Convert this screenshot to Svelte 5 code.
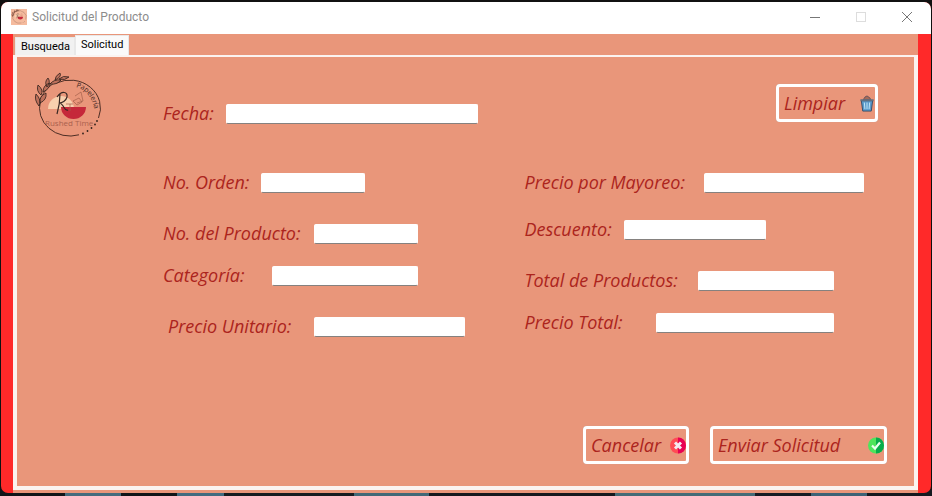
<script>
  const leftFields = [
    { id: 'orden', label: 'No. Orden:', labelWidth: 98, width: 104, space: 'none' },
    { id: 'producto', label: 'No. del Producto:', labelWidth: 151, width: 104, space: 'far' },
    { id: 'categoria', label: 'Categoría:', labelWidth: 109, width: 146, space: 'near' },
    { id: 'unitario', label: 'Precio Unitario:', labelWidth: 151, width: 151, space: 'far', indent: true }
  ];
  const rightFields = [
    { id: 'mayoreo', label: 'Precio por Mayoreo:', labelWidth: 180, width: 160, space: 'none' },
    { id: 'descuento', label: 'Descuento:', labelWidth: 100, width: 142, space: 'mid' },
    { id: 'total-productos', label: 'Total de Productos:', labelWidth: 174, width: 136, space: 'far' },
    { id: 'precio-total', label: 'Precio Total:', labelWidth: 132, width: 178, space: 'near' }
  ];
</script>

{#snippet field(f)}
  <div class="field {f.space}">
    <label class:indent={f.indent} for={f.id} style="width: {f.labelWidth}px">{f.label}</label>
    <input id={f.id} type="text" style="width: {f.width}px" />
  </div>
{/snippet}

{#snippet emblem()}
  <path d="M30 14.2A30.500 28 0 0 1 72.500 49M53 65.800A30.500 28 0 0 1 14.500 32" fill="none" stroke="#3b211b" stroke-width=".9" />
  <g fill="#30211c"><circle cx="71" cy="52" r=".9" /><circle cx="69" cy="55.500" r=".9" /><circle cx="65.500" cy="59" r=".9" /><circle cx="61.500" cy="62" r=".9" /><circle cx="57" cy="64.500" r=".9" /></g>
  <path d="M22 40a13 13 0 0 1 26 0z" fill="#f8d0ae" />
  <path d="M35 38h25a12.500 12 0 0 1-25 0z" fill="#c5283a" />
  <path d="M31 45c2-7 3-14 3-20m-3 3c5-7 11-5 10 0-1 4-5 6-8 6 5 0 5 9 9 7" fill="none" stroke="#382823" stroke-width="1.2" />
  <path d="M40 35h7m-3 0v7m3-10 6-3 3 4-5 3zm2-5 6-4 2 9-6 2" fill="none" stroke="#a5604b" stroke-width=".7" />
  <path d="M13 37C15 24 22 16 36 10" fill="none" stroke="#30211c" stroke-width=".8" />
  <path d="M13 37q-5-6-3-12 6 6 3 12m1-3q-1-7 6-10 1 7-6 10m1-8q-5-4-3-10 6 5 3 10m2-3q0-7 7-9 0 6-7 9m4-5q-3-5 1-9 3 4-1 9m3-3q4-5 11-4-4 5-11 4m5-4q0-4 5-7 2 4-5 7m4-1q4-4 10-2-4 4-10 2" fill="#bd705b" stroke="#30211c" stroke-width=".8" />
{/snippet}

<main class="desktop">
  <div class="window">
    <header>
      <svg class="app-icon" viewBox="6 3 72 72" aria-hidden="true"><rect x="6" y="3" width="72" height="72" fill="#f5bb9e" />{@render emblem()}</svg>
      <h1>Solicitud del Producto</h1>
      <div class="controls">
        <button type="button" aria-label="Minimizar"><svg viewBox="0 0 12 12"><path d="M1 6.5h10" stroke="#777" /></svg></button>
        <button type="button" aria-label="Maximizar" disabled><svg viewBox="0 0 12 12"><rect x="1.5" y="1.5" width="9" height="9" stroke="#ddd" /></svg></button>
        <button type="button" aria-label="Cerrar"><svg viewBox="0 0 12 12"><path d="M1 1l10 10M11 1L1 11" stroke="#777" /></svg></button>
      </div>
    </header>

    <div class="body">
      <div class="tabs" role="tablist">
        <button type="button" role="tab" aria-selected="false">Busqueda</button>
        <button type="button" role="tab" aria-selected="true" class="active">Solicitud</button>
      </div>
      <form class="panel" role="tabpanel" aria-label="Solicitud">
        <svg class="logo" viewBox="9 6 70 65" role="img" aria-label="Papelería Rushed Time">
          {@render emblem()}
          <path id="arc" d="M50 18Q65 22 69 42" fill="none" />
          <text class="small"><textPath href="#arc">Papelería</textPath></text>
          <text x="19" y="57" class="brand">Rushed Time</text>
        </svg>
        <div class="content">
          <div class="top">
            <div class="field date">
              <label for="fecha" style="width: 63px">Fecha:</label>
              <input id="fecha" type="text" style="width: 252px" />
            </div>
            <button type="button" class="action clear">
              Limpiar
              <svg viewBox="0 0 16 18" aria-hidden="true">
                <path d="M4 5l2-3 2-1 3 2 1 2z" fill="#a66b58" stroke="#65535b" />
                <path d="M2 6h12l-1.500 11h-9z" fill="#5c9bcb" stroke="#334b69" />
                <path d="M5.200 8l.6 7M8 8v7M10.800 8l-.6 7" stroke="#c5e9fa" />
                <path d="M1 5.500h14" stroke="#626f80" stroke-width="2" />
              </svg>
            </button>
          </div>
          <div class="columns">
            <div>{#each leftFields as f}{@render field(f)}{/each}</div>
            <div>{#each rightFields as f}{@render field(f)}{/each}</div>
          </div>
          <div class="actions">
            <button type="button" class="action cancel">
              Cancelar
              <svg viewBox="0 0 16 16" aria-hidden="true">
                <circle cx="8" cy="8" r="8" fill="#ff4b55" /><path d="M8 0a8 8 0 0 1 0 16z" fill="#e80054" />
                <path d="M5 5l6 6M11 5l-6 6" stroke="#f5e9f2" stroke-width="3" />
              </svg>
            </button>
            <button type="submit" class="action send">
              Enviar Solicitud
              <svg viewBox="0 0 16 16" aria-hidden="true">
                <circle cx="8" cy="8" r="8" fill="#4ee45c" /><path d="M8 0a8 8 0 0 1 0 16z" fill="#08ac4b" />
                <path d="M4 8l3 3 5-6" fill="none" stroke="#eafff0" stroke-width="2.200" />
              </svg>
            </button>
          </div>
        </div>
      </form>
    </div>
  </div>
</main>

<style>
  :global(body) { margin: 0; }
  * { box-sizing: border-box; }
  .desktop {
    min-height: 100vh;
    padding: 2px 1px 3px;
    display: flex;
    background: linear-gradient(90deg, #111519 0 7%, #456b7d 7% 13%, #111519 13% 19%, #426b80 19% 24%, #171c21 24% 38%, #426877 38% 46%, #16191f 46% 66%, #456b77 66% 81%, #171b24 81% 87%, #3d6276 87% 93%, #16191f 93%) bottom / 100% 6px no-repeat, #111;
  }
  .window { flex: 1; display: flex; flex-direction: column; border-radius: 7px; overflow: hidden; background: #ff2929; }
  header { height: 32px; flex: none; display: flex; align-items: center; padding: 0 1px 2px 10px; background: #fff; }
  .app-icon { width: 16px; height: 16px; }
  h1 { margin: 0 0 0 5px; font: 12px Roboto, sans-serif; color: #8c8c8c; }
  .controls { margin-left: auto; display: flex; }
  .controls button { width: 46px; height: 30px; padding: 0; border: 0; background: none; display: grid; place-items: center; }
  .controls svg { width: 12px; height: 12px; fill: none; }
  .body { flex: 1; display: flex; flex-direction: column; margin: 0 13px 0 12px; background: #e9967a; padding-bottom: 3px; }
  .tabs { height: 21px; flex: none; display: flex; align-items: flex-end; padding-left: 2px; }
  .tabs button { border: 1px solid #e8e8e8; border-bottom: 0; background: #f1f1f1; color: #000; height: 18px; padding: 0 4px 0 5px; font: 11px Roboto, Arial, sans-serif; }
  .tabs .active { height: 20px; padding: 0 5px 2px; background: #fafafa; }
  .panel { flex: 1; display: flex; align-items: flex-start; border: 4px solid #fbf3f0; border-top-width: 2px; padding-left: 18px; font: italic 18px "Segoe Script", "Open Sans", cursive; color: #ac241d; }
  .logo { width: 70px; height: 65px; margin: 18px 0 0; flex: none; overflow: visible; }
  .small { font: 7px "Open Sans", sans-serif; fill: #3d241e; }
  .brand { font: 8px "Open Sans", sans-serif; fill: #a9614e; }
  .content { flex: 1; min-width: 0; align-self: stretch; margin-left: 58px; display: flex; flex-direction: column; }
  .top { display: flex; justify-content: space-between; padding: 27px 36px 0 0; }
  .date { margin-top: 20px; }
  .field { height: 20px; display: flex; align-items: flex-start; }
  .near { margin-top: 22px; }
  .mid { margin-top: 27px; }
  .far { margin-top: 31px; }
  label { flex: none; line-height: 18px; white-space: nowrap; }
  .indent { padding-left: 5px; }
  input { height: 20px; min-width: 0; padding: 1px 4px; border: 1px solid #fff; border-bottom-color: #85817f; border-radius: 2px; background: #fff; font: 13px "Liberation Sans", Arial, sans-serif; }
  .columns { margin-top: 49px; display: grid; grid-template-columns: 361fr 389fr; }
  .actions { margin-top: auto; display: flex; justify-content: flex-end; gap: 21px; padding: 0 27px 22px 0; }
  .action { display: flex; align-items: center; justify-content: space-between; height: 38px; padding: 0 0 0 5px; border: 3px solid #fff; border-radius: 4px; background: #e9967a; box-shadow: 0 0 1px #b9a39d; color: inherit; font: inherit; white-space: nowrap; }
  .action svg { width: 16px; height: 17px; flex: none; }
  .clear { width: 102px; }
  .cancel { width: 106px; }
  .send { width: 177px; }
</style>
